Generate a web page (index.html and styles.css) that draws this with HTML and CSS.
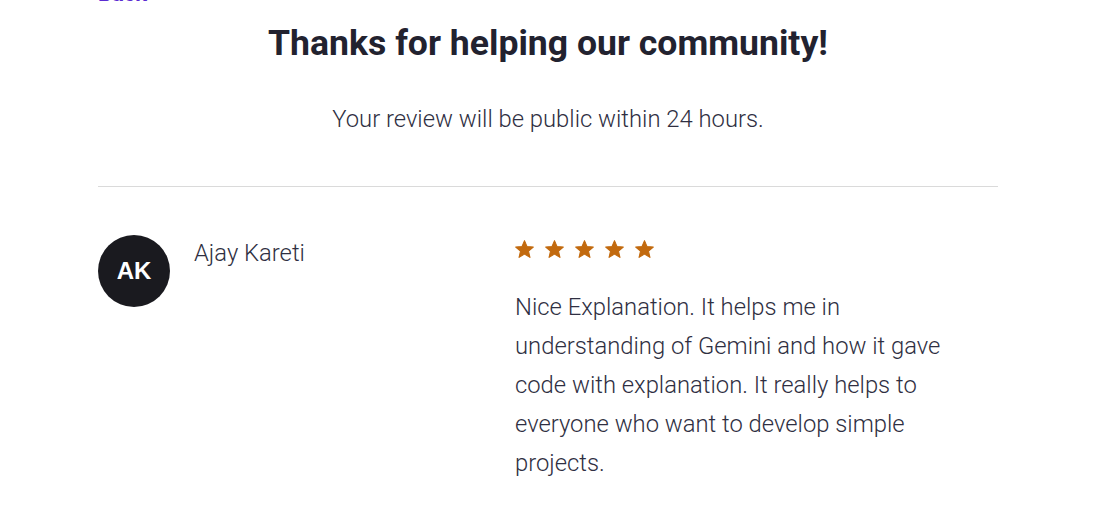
FILE: index.html
```html
<!DOCTYPE html>
<html lang="en">
<head>
<meta charset="utf-8">
<title>Thanks for your review</title>
<link rel="stylesheet" href="styles.css">
</head>
<body>
<main class="page">
  <a class="back" href="#">Back</a>
  <h1 class="title">Thanks for helping our community!</h1>
  <p class="subtitle">Your review will be public within 24 hours.</p>
  <hr class="divider">
  <section class="review">
    <div class="author">
      <div class="avatar">AK</div>
      <div class="name">Ajay Kareti</div>
    </div>
    <div class="body">
      <div class="stars" aria-label="5 stars">
        <svg viewBox="1.3 1.3 21.4 20.4"><path d="M12 17.27L18.18 21l-1.64-7.03L22 9.24l-7.19-.61L12 2 9.19 8.63 2 9.24l5.46 4.73L5.82 21z"/></svg>
        <svg viewBox="1.3 1.3 21.4 20.4"><path d="M12 17.27L18.18 21l-1.64-7.03L22 9.24l-7.19-.61L12 2 9.19 8.63 2 9.24l5.46 4.73L5.82 21z"/></svg>
        <svg viewBox="1.3 1.3 21.4 20.4"><path d="M12 17.27L18.18 21l-1.64-7.03L22 9.24l-7.19-.61L12 2 9.19 8.63 2 9.24l5.46 4.73L5.82 21z"/></svg>
        <svg viewBox="1.3 1.3 21.4 20.4"><path d="M12 17.27L18.18 21l-1.64-7.03L22 9.24l-7.19-.61L12 2 9.19 8.63 2 9.24l5.46 4.73L5.82 21z"/></svg>
        <svg viewBox="1.3 1.3 21.4 20.4"><path d="M12 17.27L18.18 21l-1.64-7.03L22 9.24l-7.19-.61L12 2 9.19 8.63 2 9.24l5.46 4.73L5.82 21z"/></svg>
      </div>
      <p class="text">Nice Explanation. It helps me in understanding of Gemini and how it gave code with explanation. It really helps to everyone who want to develop simple projects.</p>
    </div>
  </section>
</main>
</body>
</html>
```
FILE: styles.css
```css
html, body {
  margin: 0;
  padding: 0;
  background: #ffffff;
}
body {
  font-family: "Roboto", "Liberation Sans", sans-serif;
  color: #2f2f42;
  overflow: hidden;
}
.page {
  width: 900px;
  margin-left: 98px;
  display: flex;
  flex-direction: column;
}
.back {
  color: #5b2bd1;
  font-weight: 700;
  font-size: 22px;
  line-height: 26px;
  margin-top: -19px;
  text-decoration: none;
  align-self: flex-start;
}
.title {
  margin: 12px 0 0;
  text-align: center;
  font-size: 35.6px;
  line-height: 48px;
  font-weight: 700;
  color: #22222f;
}
.subtitle {
  margin: 36px 0 0;
  text-align: center;
  font-size: 23.8px;
  line-height: 32px;
  font-weight: 300;
  color: #2f2f42;
}
.divider {
  margin: 51px 0 0;
  border: 0;
  border-top: 1px solid #dadada;
  height: 0;
}
.review {
  display: grid;
  grid-template-columns: 417px 1fr;
  margin-top: 48px;
}
.author {
  display: flex;
  gap: 24px;
  align-items: flex-start;
}
.avatar {
  flex: none;
  width: 72px;
  height: 72px;
  border-radius: 50%;
  background: #1a1a1f;
  color: #ffffff;
  font-family: "Liberation Sans", "Roboto", sans-serif;
  font-weight: 700;
  font-size: 24px;
  display: flex;
  align-items: center;
  justify-content: center;
}
.name {
  font-size: 23.8px;
  line-height: 32px;
  font-weight: 300;
  margin-top: 2px;
  color: #2f2f42;
}
.stars {
  display: flex;
  gap: 11px;
  margin-top: 5px;
}
.stars svg {
  display: block;
  width: 19px;
  height: 18px;
  fill: #c26a0f;
  stroke: #c26a0f;
  stroke-width: 1.2;
  stroke-linejoin: round;
}
.text {
  margin: 30px 0 0;
  width: 432px;
  font-size: 23.8px;
  line-height: 39px;
  font-weight: 300;
  color: #2f2f42;
}
```
